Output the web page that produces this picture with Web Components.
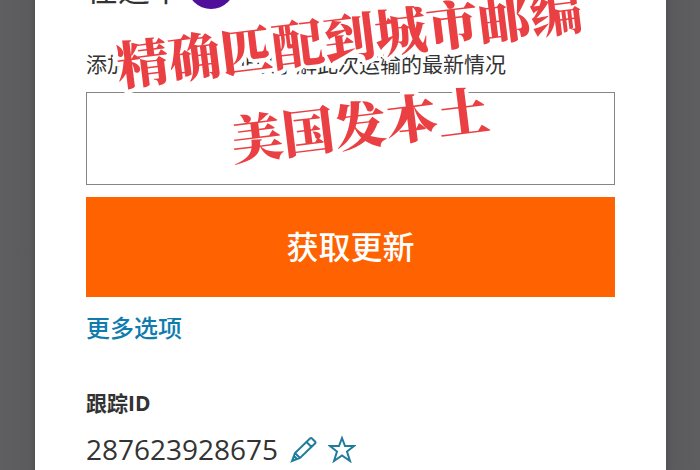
<!DOCTYPE html>
<html lang="zh-CN">
<head>
<meta charset="utf-8">
<title>在途中</title>
<style>
html, body { height: 100%; }
body { margin: 0; overflow: hidden; background: #5b5b5d; color: #333; font-family: "Open Sans", "Noto Sans CJK SC", sans-serif; }
</style>
</head>
<body>
<tracking-sheet>
  <shipment-status slot="status">在途中</shipment-status>
  <update-form></update-form>
  <more-link>更多选项</more-link>
  <tracking-id label="跟踪ID">287623928675</tracking-id>
  <promo-caption slot="overlay"></promo-caption>
</tracking-sheet>
<script>
const define = (name, html) => customElements.define(name, class extends HTMLElement {
  constructor() {
    super();
    this.attachShadow({ mode: 'open' }).innerHTML = html;
  }
  connectedCallback() {
    const label = this.shadowRoot.querySelector('[data-label]');
    if (label) label.textContent = this.getAttribute('label');
  }
});

define('tracking-sheet', `
<style>
:host { display: block; height: 100%; padding: 0 34px 0 35px; box-sizing: border-box; position: relative; overflow: hidden; background: linear-gradient(90deg, #5f5f61, #5b5b5d 30px, #525254 35px, #525254 calc(100% - 34px), #5b5b5d calc(100% - 28px), #5e5e60); }
main { background: #fff; min-height: 100%; box-sizing: border-box; padding: 0 51px; display: flow-root; }
</style>
<main><slot name="status"></slot><slot></slot></main>
<slot name="overlay"></slot>`);

define('shipment-status', `
<style>
:host { display: flow-root; height: 50px; }
h1 { display: flex; align-items: center; gap: 5px; margin: -43px 0 0; height: 56px; font-size: 32px; line-height: 48px; font-weight: 400; }
span { padding-top: 8px; }
svg { width: 48px; height: 48px; flex: none; }
</style>
<h1><span><slot></slot></span><svg viewBox="0 0 48 48" aria-hidden="true"><circle cx="24" cy="24" r="24" fill="#4f0f9b"/></svg></h1>`);

define('update-form', `
<style>
:host { display: block; }
form { display: flex; flex-direction: column; }
label { font-size: 21px; line-height: 28px; white-space: nowrap; margin-bottom: 14px; }
input { height: 93px; box-sizing: border-box; width: 100%; border: 1px solid #858585; border-radius: 0; background: #fff; font: 24px "Open Sans", "Noto Sans CJK SC", sans-serif; padding: 0 16px; margin: 0 0 12px; }
button { height: 100px; border: 0; padding: 0 0 4px; background: #ff6200; color: #fff; font: 500 32px/40px "Noto Sans CJK SC", sans-serif; }
</style>
<form>
<label for="mail">添加电子邮件地址以了解此次运输的最新情况</label>
<input id="mail" type="email">
<button type="button">获取更新</button>
</form>`);

define('more-link', `
<style>
:host { display: block; margin-top: 12px; }
a { color: #0f7cad; text-decoration: none; font: 500 24px/36px "Noto Sans CJK SC", sans-serif; }
</style>
<a href="#more"><slot></slot></a>`);

define('tracking-id', `
<style>
:host { display: block; margin-top: 44px; }
h2 { margin: 0; font-size: 21px; line-height: 28px; font-weight: 700; }
div { display: flex; align-items: center; margin-top: 12px; font-size: 28px; line-height: 40px; }
button { all: unset; display: flex; margin-left: 12px; }
button + button { margin-left: 10px; }
svg { width: 28px; height: 28px; fill: none; stroke: #1f7c9c; stroke-width: 2; stroke-linejoin: miter; }
</style>
<h2 data-label></h2>
<div><slot></slot>
<button aria-label="编辑"><svg viewBox="0 0 28 28"><path d="M2 26 5 18 20 3.500Q21 2.500 22 3.500L25 6.500Q26 7.500 25 8.500L10 23ZM5 18 10 23M16.500 7 21.500 12M2 26 4 21 7 24Z"/></svg></button>
<button aria-label="收藏"><svg viewBox="0 0 28 28"><path d="M14 3 17 11 26 11 19 16.500 22 26 14 20.500 6 26 9 16.500 2 11 11 11Z"/></svg></button>
</div>`);

define('promo-caption', `
<style>
:host { position: absolute; left: 112px; top: 26px; transform: rotate(-7deg); transform-origin: 0 0; pointer-events: none; }
p { margin: 0; font: 900 52px/76px "Noto Serif CJK SC", "Noto Sans CJK SC", serif; color: #ea4043; white-space: nowrap; text-align: center; -webkit-text-stroke: 8px #fff; paint-order: stroke fill; }
p + p { margin-top: 12px; }
</style>
<p>精确匹配到城市邮编</p><p>美国发本土</p>`);
</script>
</body>
</html>
